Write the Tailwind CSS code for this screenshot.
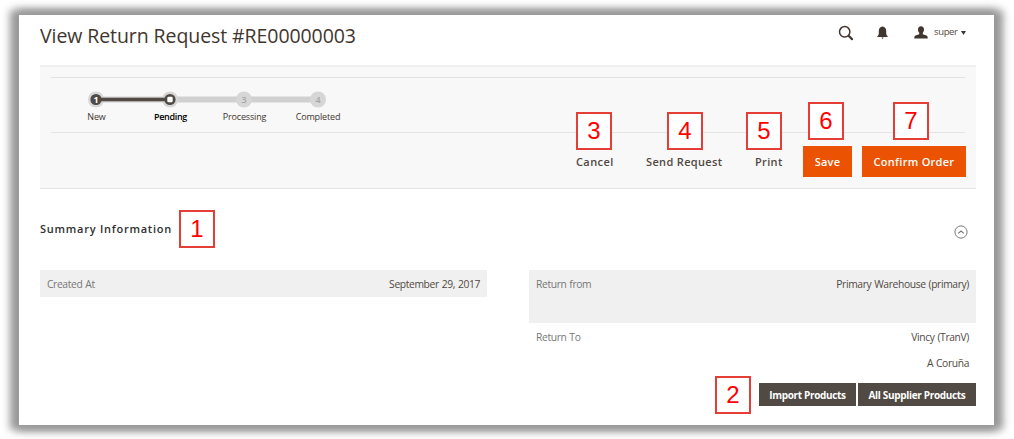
<!DOCTYPE html>
<html lang="en">
<head>
<meta charset="utf-8">
<title>View Return Request</title>
<script src="https://cdn.jsdelivr.net/npm/@tailwindcss/browser@4"></script>
</head>
<body class="bg-white w-[1014px] h-[439px] overflow-hidden pl-[19px] pt-[15px] pr-[20px] font-['Open_Sans',sans-serif] text-[#41362f]">
<main class="w-[975px] h-[410px] bg-white pl-[21px] pr-[18px] shadow-[-4px_0_8px_5px_#999,4px_0_8px_5px_#999]">
  <header class="h-[50px] flex justify-between">
    <h1 class="text-[19.5px] leading-[41px] whitespace-nowrap tracking-[-0.08px]">View Return Request #RE00000003</h1>
    <div class="flex h-[35px] items-center pr-[10px]">
      <svg class="w-[16px] h-[16px] mr-[24px]" viewBox="0 0 16 16" fill="none" stroke="#41362f"><circle cx="7.700" cy="6.800" r="5.200" stroke-width="1.500"/><path d="M11.300 10.500L15.600 14.700" stroke-width="2.200"/></svg>
      <svg class="w-[11px] h-[13px] mr-[26px]" viewBox="0 0 11 13" fill="#41362f"><path d="M5.500 0.600C8 1 9.200 2.700 9.200 5v2.500c0 1.200.7 2 1.500 2.700v.9H.3v-.9C1.100 9.500 1.800 8.700 1.800 7.500V5C1.800 2.700 3 1 5.500.6zM4.300 11.600h2.400L5.500 12.900z"/></svg>
      <svg class="w-[14px] h-[13px] mr-[6px]" viewBox="0 0 14 13" fill="#41362f"><path d="M7 .2c2 0 3 1.300 3 3.200 0 1.500-.6 2.600-1.200 3.400v1.400l3.700 1.400c.8.300 1.200.9 1.200 1.800v1H.3v-1c0-.9.4-1.500 1.200-1.800l3.700-1.400V6.800C4.600 6 4 4.900 4 3.400 4 1.500 5 .2 7 .2z"/></svg>
      <span class="text-[9.5px] leading-none tracking-[-0.35px] text-[#514943] w-[27px] -mt-px">super</span>
      <svg class="w-[5px] h-[4px]" viewBox="0 0 5 4" fill="#41362f"><path d="M0 0h5L2.500 4z"/></svg>
    </div>
  </header>

  <section class="h-[124px] bg-[#f8f8f8] border-t-2 border-b border-t-[#efefef] border-b-[#e3e3e3] px-[11px] pt-[10px]">
    <div class="h-[56px] border-y border-[#e3e3e3] pt-[13px] pl-[8px]">
      <ol class="flex text-[9px] leading-[12px] tracking-[-0.15px] text-center">
        <li class="w-[74px]">
          <svg class="block w-[74px] h-[18px]" viewBox="0 0 74 18"><path d="M37 8.500h37" stroke="#d0d0d0" stroke-width="6"/><circle cx="37" cy="8.500" r="8" fill="#d6d6d6"/><path d="M37 8.500h37" stroke="#514943" stroke-width="3.600"/><circle cx="37" cy="8.500" r="5.600" fill="#514943"/><text x="37" y="11.800" font-size="9" font-weight="700" fill="#fff" text-anchor="middle">1</text></svg>
          <div class="pt-[2px] pl-px">New</div>
        </li>
        <li class="w-[74px]">
          <svg class="block w-[74px] h-[18px]" viewBox="0 0 74 18"><path d="M0 8.500h74" stroke="#d0d0d0" stroke-width="6"/><circle cx="37" cy="8.500" r="8" fill="#d6d6d6"/><path d="M0 8.500h37" stroke="#514943" stroke-width="3.600"/><circle cx="37" cy="8.500" r="5.600" fill="#514943"/><rect x="34.300" y="5.800" width="5.400" height="5.400" rx="1.200" fill="#fff"/></svg>
          <div class="pt-[2px] pl-px font-semibold tracking-[-0.35px] text-black">Pending</div>
        </li>
        <li class="w-[74px]">
          <svg class="block w-[74px] h-[18px]" viewBox="0 0 74 18"><path d="M0 8.500h74" stroke="#d0d0d0" stroke-width="6"/><circle cx="37" cy="8.500" r="8" fill="#d6d6d6"/><text x="37" y="11.800" font-size="9" font-weight="600" fill="#a6a6a6" text-anchor="middle">3</text></svg>
          <div class="pt-[2px] pl-px">Processing</div>
        </li>
        <li class="w-[74px]">
          <svg class="block w-[74px] h-[18px]" viewBox="0 0 74 18"><path d="M0 8.500h37" stroke="#d0d0d0" stroke-width="6"/><circle cx="37" cy="8.500" r="8" fill="#d6d6d6"/><text x="37" y="11.800" font-size="9" font-weight="600" fill="#a6a6a6" text-anchor="middle">4</text></svg>
          <div class="pt-[2px]">Completed</div>
        </li>
      </ol>
    </div>
    <div class="flex justify-end -mr-px pt-[13px] text-[11px] leading-[32px] font-semibold tracking-[0.34px] whitespace-nowrap text-[#514943]">
      <span class="w-[70px] tracking-[0.4px]">Cancel</span>
      <span class="w-[109px]">Send Request</span>
      <span class="w-[48px]">Print</span>
      <button class="w-[49px] h-[31px] bg-[#eb5202] text-white text-center tracking-[0.25px] mr-[10px]">Save</button>
      <button class="w-[104px] h-[31px] bg-[#eb5202] text-white text-center tracking-[0.28px]">Confirm Order</button>
    </div>
  </section>

  <section>
    <div class="h-[81px] flex justify-between">
      <h2 class="text-[11px] leading-[80px] font-semibold tracking-[0.75px] text-[#303030]">Summary Information</h2>
      <svg class="w-[14px] h-[14px] mt-[36px] mr-[8px]" viewBox="0 0 14 14" fill="none" stroke="#777"><circle cx="7" cy="7" r="6.100"/><path d="M4.200 8.400L7 6.100l2.800 2.300" stroke-width="1.200"/></svg>
    </div>
    <div class="flex justify-between text-[10.3px] leading-[26px] tracking-[-0.37px] [word-spacing:0.6px] whitespace-nowrap">
      <dl class="w-[447px] h-[27px] px-[7px] pt-px bg-[#f0f0f0] flex justify-between">
        <dt class="text-[#777]">Created At</dt><dd class="text-[#514943]">September 29, 2017</dd>
      </dl>
      <div class="w-[447px]">
        <dl class="h-[53px] px-[7px] pt-px bg-[#f0f0f0] flex justify-between">
          <dt class="text-[#777]">Return from</dt><dd class="text-[#514943]">Primary Warehouse (primary)</dd>
        </dl>
        <dl class="h-[60px] px-[7px] pt-px flex justify-between">
          <dt class="text-[#777]">Return To</dt><dd class="text-[#514943] text-right">Vincy (TranV)<br>A Coruña</dd>
        </dl>
      </div>
    </div>
    <div class="flex justify-end gap-[2px] text-[10px] leading-[22px] font-bold tracking-[-0.33px] text-white text-center whitespace-nowrap">
      <button class="w-[97px] h-[23px] bg-[#514943]">Import Products</button>
      <button class="w-[118px] h-[23px] bg-[#514943]">All Supplier Products</button>
    </div>
  </section>
</main>

<!-- numbered callouts -->
<div class="font-['Liberation_Sans',sans-serif] text-[24px] leading-[34px] text-[#f00] text-center">
  <span class="absolute left-[179px] top-[210px] w-[36px] h-[38px] border-2 border-[#e53e36] bg-white">1</span>
  <span class="absolute left-[715px] top-[376px] w-[36px] h-[38px] border-2 border-[#e53e36] bg-white">2</span>
  <span class="absolute left-[576px] top-[112px] w-[36px] h-[38px] border-2 border-[#e53e36] bg-white">3</span>
  <span class="absolute left-[667px] top-[112px] w-[36px] h-[38px] border-2 border-[#e53e36] bg-white">4</span>
  <span class="absolute left-[746px] top-[112px] w-[36px] h-[38px] border-2 border-[#e53e36] bg-white">5</span>
  <span class="absolute left-[808px] top-[102px] w-[36px] h-[38px] border-2 border-[#e53e36] bg-white">6</span>
  <span class="absolute left-[893px] top-[102px] w-[36px] h-[38px] border-2 border-[#e53e36] bg-white">7</span>
</div>
</body>
</html>
